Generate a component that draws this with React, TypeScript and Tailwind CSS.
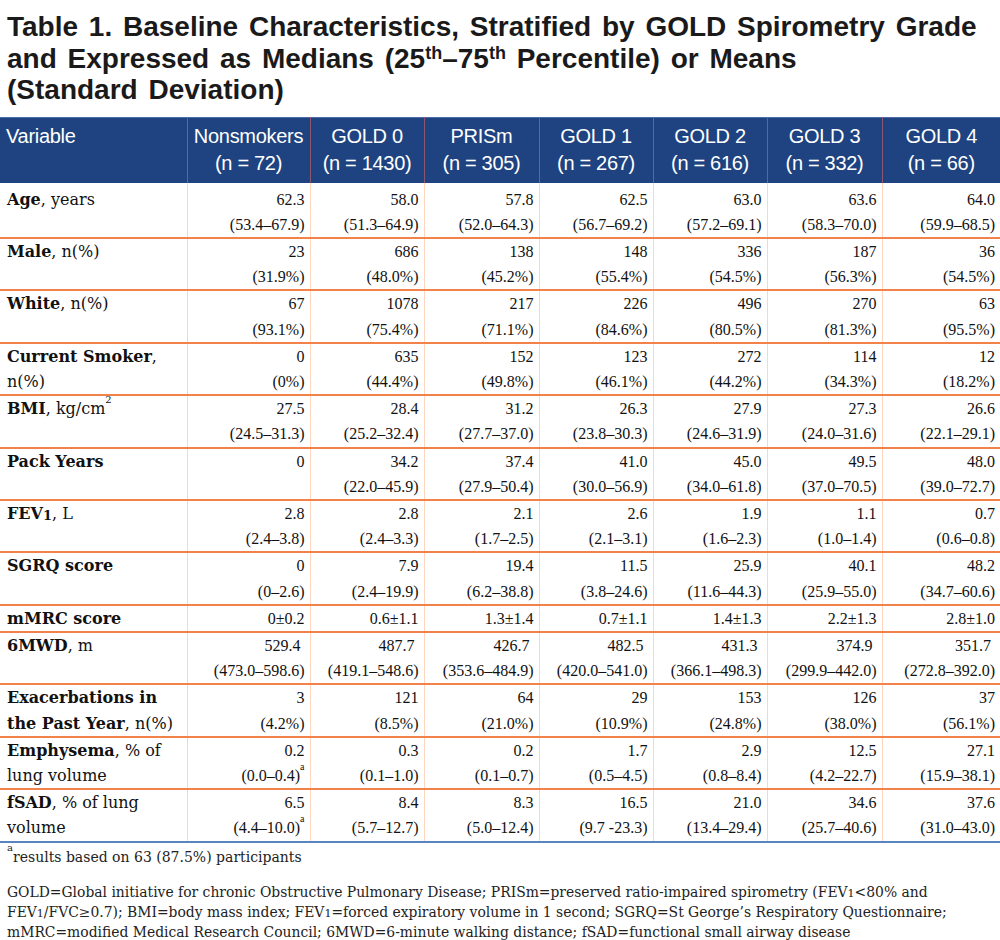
import React from "react";

type Row = {
  label: React.ReactNode;
  values: [string, React.ReactNode?][];
  single?: boolean;
};

const cols = [
  { name: "Nonsmokers", n: "72" },
  { name: "GOLD 0", n: "1430" },
  { name: "PRISm", n: "305" },
  { name: "GOLD 1", n: "267" },
  { name: "GOLD 2", n: "616" },
  { name: "GOLD 3", n: "332" },
  { name: "GOLD 4", n: "66" },
];

const widths = [187, 123, 114, 115, 114, 114, 115, 118];

const Sup = ({ children }: { children: React.ReactNode }) => (
  <sup className="text-[10px] align-super leading-none">{children}</sup>
);

const rows: Row[] = [
  {
    label: (
      <>
        <b>Age</b>, years
      </>
    ),
    values: [
      ["62.3", "(53.4–67.9)"],
      ["58.0", "(51.3–64.9)"],
      ["57.8", "(52.0–64.3)"],
      ["62.5", "(56.7–69.2)"],
      ["63.0", "(57.2–69.1)"],
      ["63.6", "(58.3–70.0)"],
      ["64.0", "(59.9–68.5)"],
    ],
  },
  {
    label: (
      <>
        <b>Male</b>, n(%)
      </>
    ),
    values: [
      ["23", "(31.9%)"],
      ["686", "(48.0%)"],
      ["138", "(45.2%)"],
      ["148", "(55.4%)"],
      ["336", "(54.5%)"],
      ["187", "(56.3%)"],
      ["36", "(54.5%)"],
    ],
  },
  {
    label: (
      <>
        <b>White</b>, n(%)
      </>
    ),
    values: [
      ["67", "(93.1%)"],
      ["1078", "(75.4%)"],
      ["217", "(71.1%)"],
      ["226", "(84.6%)"],
      ["496", "(80.5%)"],
      ["270", "(81.3%)"],
      ["63", "(95.5%)"],
    ],
  },
  {
    label: (
      <>
        <b>Current Smoker</b>,<br />
        n(%)
      </>
    ),
    values: [
      ["0", "(0%)"],
      ["635", "(44.4%)"],
      ["152", "(49.8%)"],
      ["123", "(46.1%)"],
      ["272", "(44.2%)"],
      ["114", "(34.3%)"],
      ["12", "(18.2%)"],
    ],
  },
  {
    label: (
      <>
        <b>BMI</b>, kg/cm<Sup>2</Sup>
      </>
    ),
    values: [
      ["27.5", "(24.5–31.3)"],
      ["28.4", "(25.2–32.4)"],
      ["31.2", "(27.7–37.0)"],
      ["26.3", "(23.8–30.3)"],
      ["27.9", "(24.6–31.9)"],
      ["27.3", "(24.0–31.6)"],
      ["26.6", "(22.1–29.1)"],
    ],
  },
  {
    label: <b>Pack Years</b>,
    values: [
      ["0", ""],
      ["34.2", "(22.0–45.9)"],
      ["37.4", "(27.9–50.4)"],
      ["41.0", "(30.0–56.9)"],
      ["45.0", "(34.0–61.8)"],
      ["49.5", "(37.0–70.5)"],
      ["48.0", "(39.0–72.7)"],
    ],
  },
  {
    label: (
      <>
        <b>
          FEV<span className="text-[13px] relative top-[1px]">1</span>
        </b>
        , L
      </>
    ),
    values: [
      ["2.8", "(2.4–3.8)"],
      ["2.8", "(2.4–3.3)"],
      ["2.1", "(1.7–2.5)"],
      ["2.6", "(2.1–3.1)"],
      ["1.9", "(1.6–2.3)"],
      ["1.1", "(1.0–1.4)"],
      ["0.7", "(0.6–0.8)"],
    ],
  },
  {
    label: <b>SGRQ score</b>,
    values: [
      ["0", "(0–2.6)"],
      ["7.9", "(2.4–19.9)"],
      ["19.4", "(6.2–38.8)"],
      ["11.5", "(3.8–24.6)"],
      ["25.9", "(11.6–44.3)"],
      ["40.1", "(25.9–55.0)"],
      ["48.2", "(34.7–60.6)"],
    ],
  },
  {
    label: <b>mMRC score</b>,
    single: true,
    values: [
      ["0±0.2"],
      ["0.6±1.1"],
      ["1.3±1.4"],
      ["0.7±1.1"],
      ["1.4±1.3"],
      ["2.2±1.3"],
      ["2.8±1.0"],
    ],
  },
  {
    label: (
      <>
        <b>6MWD</b>, m
      </>
    ),
    values: [
      ["529.4\u00a0", "(473.0–598.6)"],
      ["487.7\u00a0", "(419.1–548.6)"],
      ["426.7\u00a0", "(353.6–484.9)"],
      ["482.5\u00a0", "(420.0–541.0)"],
      ["431.3\u00a0", "(366.1–498.3)"],
      ["374.9\u00a0", "(299.9–442.0)"],
      ["351.7\u00a0", "(272.8–392.0)"],
    ],
  },
  {
    label: (
      <>
        <b>Exacerbations in</b>
        <br />
        <b>the Past Year</b>, n(%)
      </>
    ),
    values: [
      ["3", "(4.2%)"],
      ["121", "(8.5%)"],
      ["64", "(21.0%)"],
      ["29", "(10.9%)"],
      ["153", "(24.8%)"],
      ["126", "(38.0%)"],
      ["37", "(56.1%)"],
    ],
  },
  {
    label: (
      <>
        <b>Emphysema</b>, % of
        <br />
        lung volume
      </>
    ),
    values: [
      ["0.2", <>(0.0–0.4)<Sup>a</Sup></>],
      ["0.3", "(0.1–1.0)"],
      ["0.2", "(0.1–0.7)"],
      ["1.7", "(0.5–4.5)"],
      ["2.9", "(0.8–8.4)"],
      ["12.5", "(4.2–22.7)"],
      ["27.1", "(15.9–38.1)"],
    ],
  },
  {
    label: (
      <>
        <b>fSAD</b>, % of lung
        <br />
        volume
      </>
    ),
    values: [
      ["6.5", <>(4.4–10.0)<Sup>a</Sup></>],
      ["8.4", "(5.7–12.7)"],
      ["8.3", "(5.0–12.4)"],
      ["16.5", "(9.7 -23.3)"],
      ["21.0", "(13.4–29.4)"],
      ["34.6", "(25.7–40.6)"],
      ["37.6", "(31.0–43.0)"],
    ],
  },
];

export default function App() {
  return (
    <div className="w-[1000px] h-[940px] bg-white text-[#111] overflow-hidden">
      <h1 className="px-[7px] pt-[11px] pb-[11px] font-['Liberation_Sans',Arial,sans-serif] font-bold text-[28px] leading-[31.5px] [word-spacing:3px] text-[#1a1a1a]">
        Table 1. Baseline Characteristics, Stratified by GOLD Spirometry Grade
        <br />
        and Expressed as Medians (25<sup className="text-[18px]">th</sup>–75
        <sup className="text-[18px]">th</sup> Percentile) or Means
        <br />
        (Standard Deviation)
      </h1>

      <table className="w-[1000px] table-fixed border-collapse">
        <colgroup>
          {widths.map((w, i) => (
            <col key={i} style={{ width: w }} />
          ))}
        </colgroup>
        <thead>
          <tr className="bg-[#1e4380] text-white font-['Liberation_Sans',Arial,sans-serif] text-[20px] leading-[27px] border-t border-[#4d6fa8]">
            <th className="text-left font-normal align-top px-[6px] pt-[5px] pb-[6px] tracking-[-0.3px]">
              Variable
            </th>
            {cols.map((c) => (
              <th
                key={c.name}
                className="font-normal align-top pt-[5px] pb-[6px] border-l border-[#8b5670] tracking-[-0.3px] whitespace-nowrap"
              >
                {c.name}
                <br />
                (n = {c.n})
              </th>
            ))}
          </tr>
        </thead>
        <tbody>
          {rows.map((r, ri) => (
            <tr
              key={ri}
              className={`align-top ${
                ri === rows.length - 1
                  ? "border-b-2 border-[#5a84c0]"
                  : "border-b-2 border-[#f3814a]"
              }`}
            >
              <td
                className={`px-[7px] font-['DejaVu_Serif',serif] text-[16px] leading-[25.2px] whitespace-nowrap ${
                  ri === 0 ? "pt-[4px]" : ""
                }`}
              >
                {r.label}
              </td>
              {r.values.map(([top, bottom], ci) => (
                <td
                  key={ci}
                  className={`border-l border-[#fcd6bf] text-right pr-[5px] font-['Liberation_Serif',serif] text-[16px] leading-[25.2px] whitespace-nowrap ${
                    ri === 0 ? "pt-[4px]" : ""
                  }`}
                >
                  <div>{top}</div>
                  {!r.single && <div>{bottom || "\u00a0"}</div>}
                </td>
              ))}
            </tr>
          ))}
        </tbody>
      </table>

      <div className="px-[7px] pt-[4px] font-['DejaVu_Serif',serif] text-[#222]">
        <p className="text-[14px] leading-[20px]">
          <Sup>a</Sup>results based on 63 (87.5%) participants
        </p>
        <p className="mt-[16px] text-[13.9px] leading-[18px] whitespace-nowrap">
          GOLD=Global initiative for chronic Obstructive Pulmonary Disease;
          PRISm=preserved ratio-impaired spirometry (FEV
          <span className="text-[11px]">1</span>&lt;80% and
          <br />
          FEV<span className="text-[11px]">1</span>/FVC≥0.7); BMI=body mass
          index; FEV<span className="text-[11px]">1</span>=forced expiratory
          volume in 1 second; SGRQ=St George’s Respiratory Questionnaire;
          <br />
          mMRC=modified Medical Research Council; 6MWD=6-minute walking
          distance; fSAD=functional small airway disease
        </p>
      </div>
    </div>
  );
}
